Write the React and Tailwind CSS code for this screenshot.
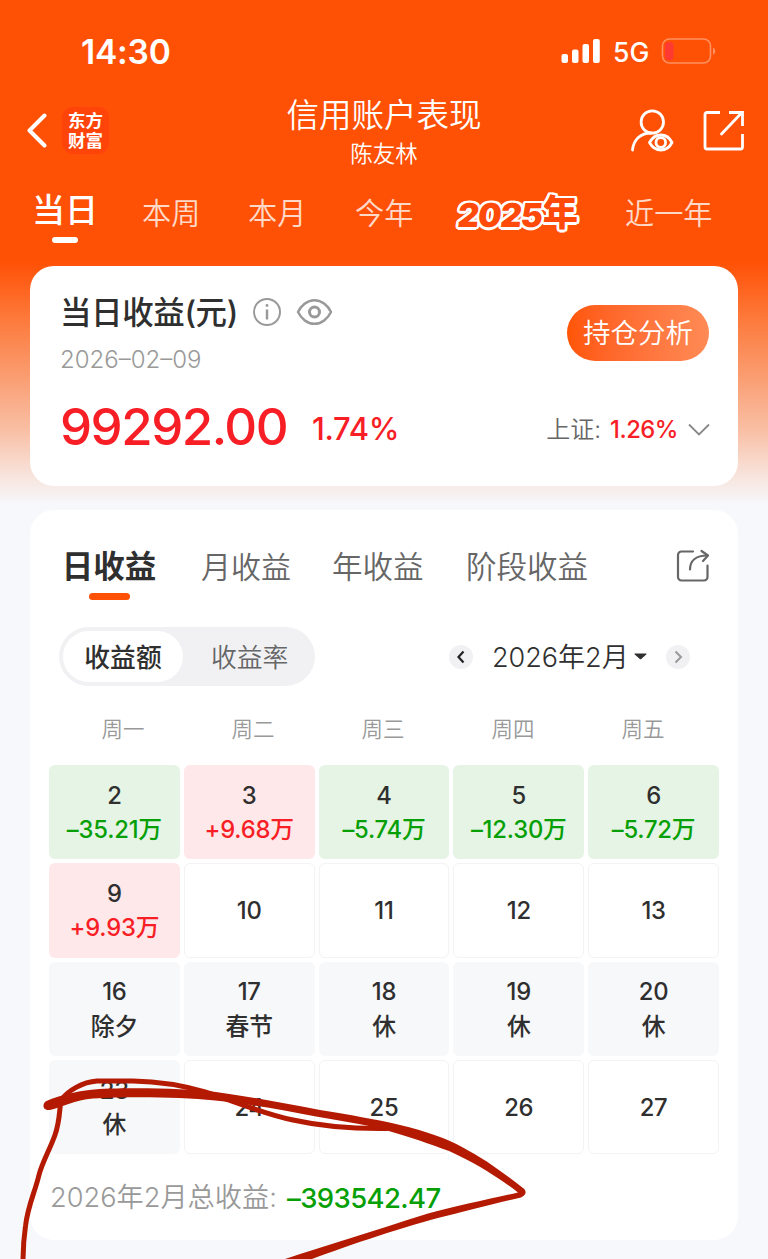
import { useState } from "react";

const periods = ["当日", "本周", "本月", "今年", "2025年", "近一年"];

const periodBox = {
  当日: "w-[110px] pl-[32px]",
  本周: "w-[106px]",
  本月: "w-[107px]",
  今年: "w-[101px]",
  "2025年": "w-[169px]",
  近一年: "w-[90px]",
};

const weekdays = ["周一", "周二", "周三", "周四", "周五"];

const days = [
  { day: 2, value: "–35.21万", type: "loss" },
  { day: 3, value: "+9.68万", type: "gain" },
  { day: 4, value: "–5.74万", type: "loss" },
  { day: 5, value: "–12.30万", type: "loss" },
  { day: 6, value: "–5.72万", type: "loss" },
  { day: 9, value: "+9.93万", type: "gain" },
  { day: 10, type: "empty" },
  { day: 11, type: "empty" },
  { day: 12, type: "empty" },
  { day: 13, type: "empty" },
  { day: 16, value: "除夕", type: "rest" },
  { day: 17, value: "春节", type: "rest" },
  { day: 18, value: "休", type: "rest" },
  { day: 19, value: "休", type: "rest" },
  { day: 20, value: "休", type: "rest" },
  { day: 23, value: "休", type: "rest" },
  { day: 24, type: "empty" },
  { day: 25, type: "empty" },
  { day: 26, type: "empty" },
  { day: 27, type: "empty" },
];

const cellStyle = {
  loss: "bg-[#e5f4e5]",
  gain: "bg-[#ffe8ea]",
  rest: "bg-[#f7f8fa]",
  empty: "bg-white border border-[#f3f3f5]",
};

const valueStyle = {
  loss: "text-[#06a006]",
  gain: "text-[#f71e26]",
  rest: "text-[#2f2f2f]",
};

function StatusBar() {
  return (
    <div className="flex items-center h-[102px] pl-[81px] pr-[51px]">
      <span className="pt-[3px] text-[33.5px] font-semibold leading-none tracking-[-0.2px]">14:30</span>
      <div className="flex items-center ml-auto">
        <svg width="40" height="24" viewBox="0 0 40 24" fill="#fff">
          <rect x="0.5" y="15" width="6.5" height="9" rx="2" />
          <rect x="11" y="10.5" width="6.5" height="13.5" rx="2" />
          <rect x="21.5" y="5" width="6.5" height="19" rx="2" />
          <rect x="32" y="0" width="6.8" height="24" rx="2" />
        </svg>
        <span className="ml-[12px] w-[37px] pt-[2px] text-[26.5px] font-medium leading-none">5G</span>
        <svg className="ml-[11px]" width="56" height="26" viewBox="0 0 56 26" fill="none">
          <rect x="1.5" y="1" width="48" height="24" rx="7" stroke="#ff9162" strokeWidth="1.6" />
          <rect x="4" y="4" width="8.5" height="18" rx="3.5" fill="#ff3a33" />
          <path d="M52 9.5c3 1.6 3 5.6 0 7.2z" fill="#ff9162" />
        </svg>
      </div>
    </div>
  );
}

function Header() {
  return (
    <div className="flex items-start h-[82px]">
      <div className="flex items-center w-[250px] pl-[26px] pt-[5px]">
        <svg width="22" height="36" viewBox="0 0 22 36" fill="none" stroke="#fff" strokeWidth="4" strokeLinecap="round" strokeLinejoin="round">
          <path d="M18.5 2.5L3.5 17.5L18.5 32.5" />
        </svg>
        <div className="ml-[14px] flex flex-col items-center justify-center w-[47px] h-[47px] rounded-[11px] bg-[#ff4409] text-[17.5px] font-bold leading-[19.5px]">
          <span>东方</span>
          <span>财富</span>
        </div>
      </div>
      <div className="flex flex-col items-center w-[268px]">
        <h1 className="text-[32.5px] font-[350] leading-[27px]">信用账户表现</h1>
        <p className="mt-[12px] text-[22.5px] font-[350] leading-[26px]">陈友林</p>
      </div>
      <div className="flex items-center flex-1 pl-[112px] pt-[6px]">
        <svg width="44" height="46" viewBox="0 0 44 46" fill="none" stroke="#fff" strokeWidth="2.8" strokeLinecap="round">
          <circle cx="22.3" cy="14" r="11.2" />
          <path d="M2.5 42C3.5 32 10 25 21.5 25" />
          <path d="M19.5 34.5C25 24.5 37 24.5 42 34.5C37 44.5 25 44.5 19.5 34.5Z" strokeLinejoin="round" />
          <circle cx="30.8" cy="34.5" r="4.8" />
        </svg>
        <svg className="ml-[29px]" width="42" height="42" viewBox="0 0 42 42" fill="none" stroke="#fff" strokeWidth="2.8">
          <path d="M17 2.5H4a2 2 0 0 0-2 2V37a2 2 0 0 0 2 2H37.5a2 2 0 0 0 2-2V24" />
          <path d="M26 2.5H39.5V16" />
          <path d="M38.5 3L18.5 24" strokeLinecap="round" />
        </svg>
      </div>
    </div>
  );
}

function PeriodTabs() {
  const [active, setActive] = useState("当日");

  return (
    <div className="flex h-[82px]">
      {periods.map((item) => (
        <button
          key={item}
          type="button"
          onClick={() => setActive(item)}
          className={`shrink-0 flex flex-col items-start whitespace-nowrap ${periodBox[item]} ${item === "当日" ? "mr-[32px]" : ""}`}
        >
          {item === "2025年" ? (
            <span className="flex items-center mt-[10px] pl-[2px] leading-[38px] font-black text-[#ff4a0a] [text-shadow:2.5px_0_#fff,-2.5px_0_#fff,0_2.5px_#fff,0_-2.5px_#fff,1.8px_1.8px_#fff,-1.8px_1.8px_#fff,1.8px_-1.8px_#fff,-1.8px_-1.8px_#fff,2.3px_1px_#fff,-2.3px_1px_#fff,2.3px_-1px_#fff,-2.3px_-1px_#fff]">
              <span className="inline-block -skew-x-6 pt-[2px] text-[33px] tracking-[-1px]">2025</span>
              <span className="-mt-[3px] text-[36px]">年</span>
            </span>
          ) : active === item ? (
            <span className="flex flex-col items-center">
              <span className="mt-[6px] text-[33px] leading-[40px] font-medium">{item}</span>
              <span className="mt-[7px] w-[26px] h-[6px] rounded-full bg-white"></span>
            </span>
          ) : (
            <span className="mt-[11px] text-[29.2px] leading-[38px] font-[350] text-[#ffd9c8]">{item}</span>
          )}
        </button>
      ))}
    </div>
  );
}

function ProfitCard() {
  return (
    <section className="mx-[30px] h-[220px] rounded-[24px] bg-white pl-[30px] pr-[29px]">
      <div className="flex justify-between">
        <div>
          <div className="flex items-center h-[40px] mt-[26px]">
            <h2 className="w-[192px] pt-[1px] whitespace-nowrap text-[31.5px] leading-[40px] font-medium tracking-[-0.4px] text-[#2f2f2f]">当日收益(元)</h2>
            <svg width="30" height="30" viewBox="0 0 30 30" fill="none" stroke="#999" strokeWidth="2">
              <circle cx="15" cy="15" r="13" />
              <path d="M15 12.5V22.5" strokeWidth="2.4" />
              <circle cx="15" cy="8.5" r="1.4" fill="#999" stroke="none" />
            </svg>
            <svg className="ml-[14px]" width="38" height="30" viewBox="0 0 38 30" fill="none" stroke="#999" strokeWidth="2.5">
              <path d="M2 15C5 9 11 3.2 18.5 3.2S32 9 35 15C32 21 26 26.8 18.5 26.8S5 21 2 15Z" strokeLinejoin="round" />
              <circle cx="18.5" cy="15" r="5" strokeWidth="3" />
            </svg>
          </div>
          <p className="mt-[14px] text-[24px] leading-[28px] font-[350] text-[#999]">2026–02–09</p>
        </div>
        <button type="button" className="mt-[39px] w-[142px] h-[56px] rounded-full bg-gradient-to-r from-[#ff5504] to-[#ff8a55] pt-[2px] text-[27.5px] font-[350] text-white">
          持仓分析
        </button>
      </div>
      <div className="flex items-center mt-[22px] h-[60px] text-[#f71e26]">
        <span className="w-[252px] text-[51px] leading-none font-medium tracking-[-1.5px]">99292.00</span>
        <span className="text-[31px] leading-none font-medium tracking-[-0.3px] pt-[5px]">1.74%</span>
        <div className="flex items-center ml-auto -mr-[2px] pt-[7px]">
          <span className="text-[24px] leading-none font-[350] text-[#666]">上证:</span>
          <span className="ml-[9px] text-[23.8px] leading-none font-medium tracking-[-0.5px]">1.26%</span>
          <svg className="ml-[9px]" width="24" height="14" viewBox="0 0 24 14" fill="none" stroke="#888" strokeWidth="1.8">
            <path d="M2 1.5L12 11.5L22 1.5" />
          </svg>
        </div>
      </div>
    </section>
  );
}

function ShareIcon() {
  return (
    <svg className="mt-[1px]" width="36" height="36" viewBox="0 0 36 36" fill="none" stroke="#666" strokeWidth="2.2" strokeLinecap="round" strokeLinejoin="round">
      <path d="M18 3.5H6.5a3.5 3.5 0 0 0-3.5 3.5V29a3.5 3.5 0 0 0 3.5 3.5H29a3.5 3.5 0 0 0 3.5-3.5V17.5" />
      <path d="M15 21.5C15 13 20.5 7.5 32.5 7.5" />
      <path d="M26.5 3L33 7.5L28 13" />
    </svg>
  );
}

function ChartTabs() {
  return (
    <div className="flex items-start pt-[37px] pl-[31px] text-[30.5px] leading-[40px] font-[350] text-[#666]">
      <div className="flex flex-col items-center w-[96px] font-bold text-[#2f2f2f]">
        <span className="text-[31.5px] whitespace-nowrap">日收益</span>
        <span className="mt-[6px] w-[41px] h-[7px] rounded-full bg-[#ff5106]"></span>
      </div>
      <span className="ml-[44px] w-[131px] text-[30px]">月收益</span>
      <span className="w-[134px]">年收益</span>
      <span className="w-[209px]">阶段收益</span>
      <ShareIcon />
    </div>
  );
}

function Toolbar() {
  return (
    <div className="flex items-center mt-[27px] ml-[29px]">
      <div className="flex items-center w-[256px] h-[59px] p-[4px] rounded-full bg-[#f1f1f4] text-[25.8px]">
        <div className="flex items-center justify-center w-[120px] h-full pt-[3px] rounded-full bg-white font-medium text-[#2f2f2f]">收益额</div>
        <div className="pl-[28px] pt-[3px] font-[350] text-[#666]">收益率</div>
      </div>
      <div className="flex items-center ml-[134px]">
        <button type="button" className="flex items-center justify-center w-[24px] h-[24px] rounded-full bg-[#f1f1f4]">
          <svg width="10" height="14" viewBox="0 0 10 14" fill="none" stroke="#222" strokeWidth="2.2">
            <path d="M7.5 1.5L2.5 7L7.5 12.5" />
          </svg>
        </button>
        <span className="ml-[19px] w-[142px] pt-[2px] whitespace-nowrap text-[27px] leading-none font-[350] text-[#2f2f2f]">2026年2月</span>
        <svg width="13" height="7" viewBox="0 0 13 7" fill="#2f2f2f">
          <path d="M0.5 1.2Q0.2 0.5 1 0.5H12Q12.8 0.5 12.5 1.2L7.2 6Q6.5 6.6 5.8 6Z" />
        </svg>
        <button type="button" className="flex items-center justify-center ml-[19px] w-[24px] h-[24px] rounded-full bg-[#f1f1f4]">
          <svg width="10" height="14" viewBox="0 0 10 14" fill="none" stroke="#999" strokeWidth="2">
            <path d="M2.5 1.5L8 7L2.5 12.5" />
          </svg>
        </button>
      </div>
    </div>
  );
}

function Calendar() {
  return (
    <>
      <div className="grid grid-cols-5 mt-[25px] ml-[28px] w-[650px] text-center text-[21.5px] leading-[36px] font-[350] text-[#999]">
        {weekdays.map((item) => (
          <span key={item}>{item}</span>
        ))}
      </div>
      <div className="grid grid-cols-5 gap-x-[4px] gap-y-[4.2px] mt-[18px] ml-[19px] w-[670px]">
        {days.map((item) => (
          <div
            key={item.day}
            className={`flex flex-col items-center justify-center h-[94.2px] pt-[2px] rounded-[6px] text-[23.8px] leading-[34.5px] font-[450] tracking-[-0.2px] text-[#2f2f2f] ${cellStyle[item.type]}`}
          >
            <span>{item.day}</span>
            {item.value && <span className={`whitespace-nowrap ${valueStyle[item.type]}`}>{item.value}</span>}
          </div>
        ))}
      </div>
      <div className="flex items-center mt-[23px] ml-[20px] h-[42px] whitespace-nowrap text-[27.2px]">
        <span className="w-[237px] font-[350] text-[#999]">2026年2月总收益:</span>
        <span className="text-[27.5px] font-medium tracking-[-0.6px] text-[#06a006]">–393542.47</span>
      </div>
    </>
  );
}

// Freehand marker circle around the monthly total
function MarkerStroke() {
  return (
    <svg className="absolute left-0 top-[1059px] pointer-events-none" width="768" height="200" viewBox="0 1059 768 200" fill="none" stroke="#b41a02" strokeLinecap="round" strokeLinejoin="round">
      <path strokeWidth="5" d="M387 1128.5C350 1129 320 1126 293 1120C260 1113 235 1101 205 1092C185 1086 160 1081.500 133 1081H97C82 1082 68 1091 62 1099C59 1103 61 1118 55 1135C50 1149 42 1163 39 1175C35 1192 28 1205 25.500 1226C23.500 1240 23 1250 23 1262" />
      <path fill="#b41a02" stroke="none" d="M46.500 1101C60 1095 80 1089.500 110 1088.500C145 1087.500 190 1088.500 216 1092C250 1096.500 285 1103.500 320 1110C350 1115 375 1119 400 1125C425 1131 448 1139 462 1147C485 1159 505 1174 523 1188C527 1191 526.500 1195 521 1197.500C500 1202 470 1210 448 1215.500C405 1226 350 1245 312 1259C302 1262 292 1264 282 1260C322 1247 370 1232 428 1213.500C455 1206 490 1199 518 1192.500C495 1175 475 1163 449 1151C430 1144 410 1137 387 1130.500C360 1123 340 1121 316 1116.500C280 1109 245 1103.500 215 1100.500C180 1097 130 1096.500 93 1098.500C75 1100 62 1107 50 1110C42 1111 42 1103 46.500 1101Z" />
    </svg>
  );
}

export default function App() {
  return (
    <div className="relative w-[768px] h-[1259px] overflow-hidden bg-[#f6f8fb] font-['Inter','Noto_Sans_CJK_SC',sans-serif]">
      <div className="h-[510px] text-white bg-[linear-gradient(180deg,#ff5106_0px,#ff5106_262px,#fd7a3c_320px,#fa9c70_375px,#f9bfa4_430px,#f8e3dc_475px,#f6f8fb_504px)]">
        <StatusBar />
        <Header />
        <PeriodTabs />
        <ProfitCard />
      </div>
      <section className="mx-[30px] h-[730px] rounded-[24px] bg-white">
        <ChartTabs />
        <Toolbar />
        <Calendar />
      </section>
      <MarkerStroke />
    </div>
  );
}
